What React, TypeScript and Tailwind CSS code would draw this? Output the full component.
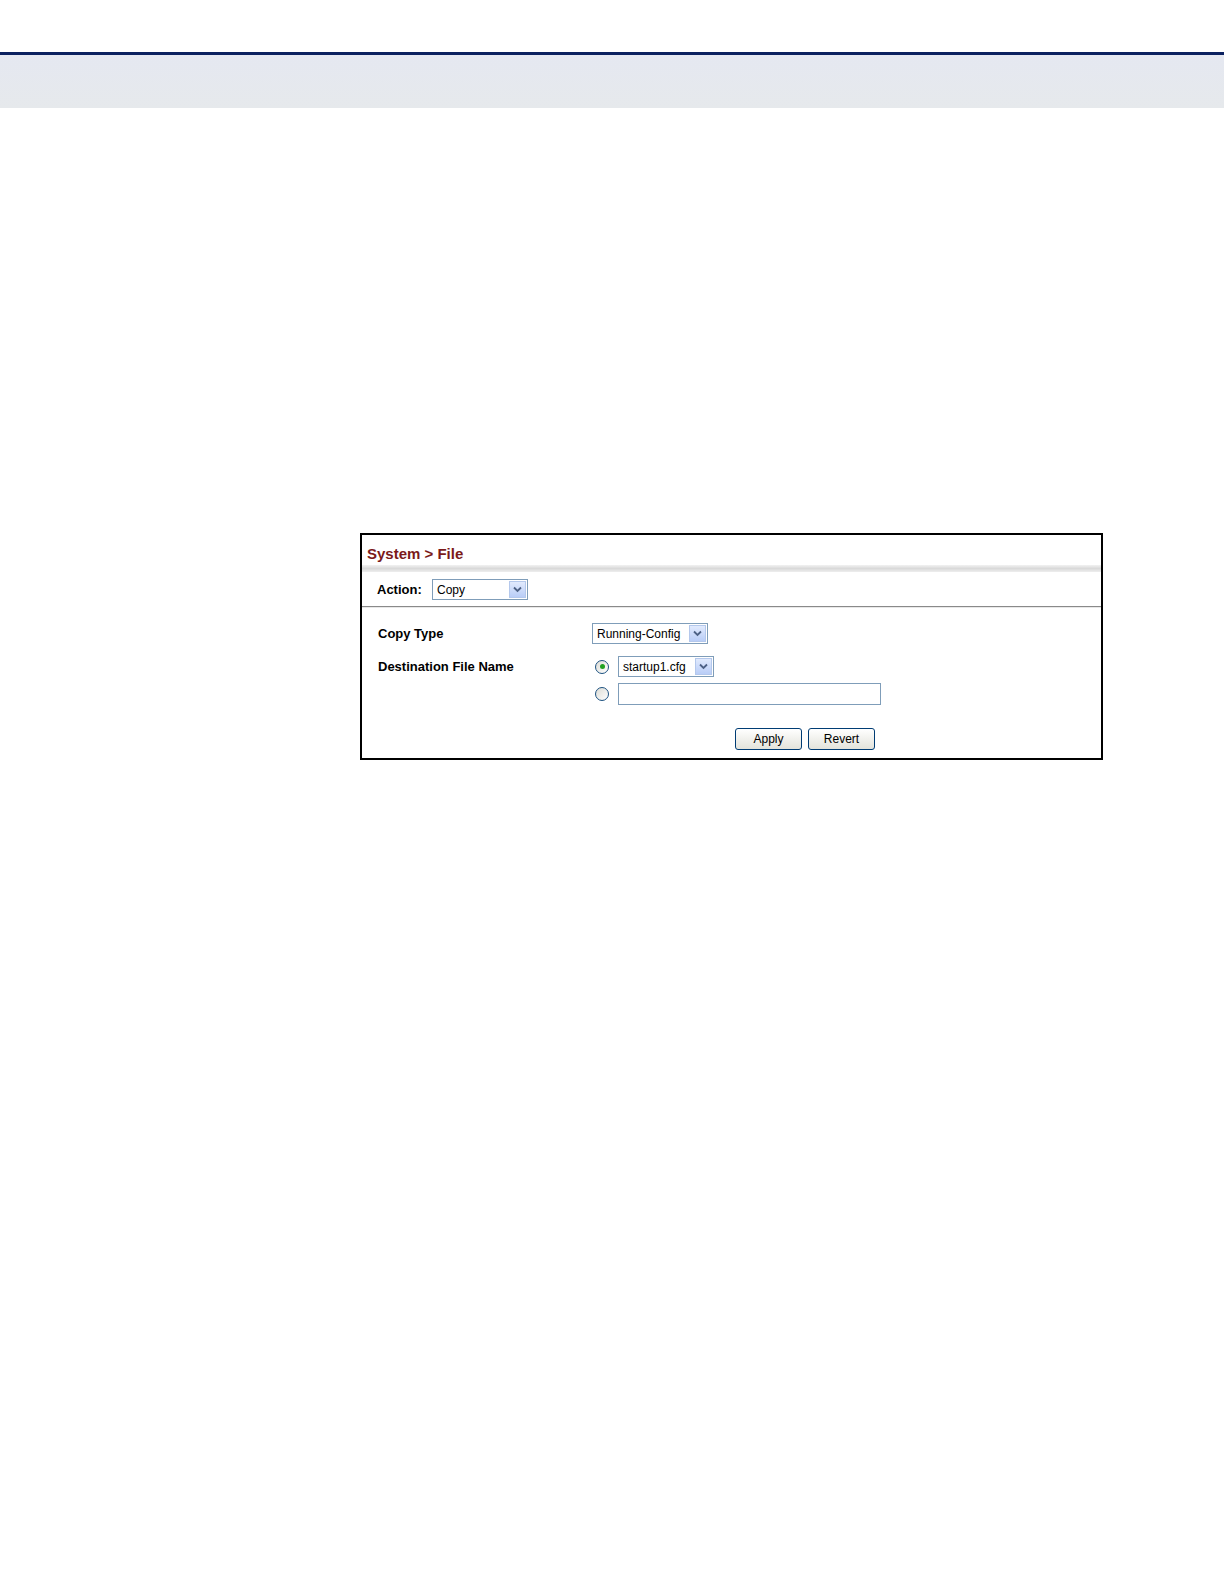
import React from "react";

const font = { fontFamily: '"Liberation Sans", Arial, sans-serif' };

function Arrow() {
  return (
    <span className="flex h-full w-[17px] items-center justify-center border border-[#b4c8ec] bg-gradient-to-b from-[#e1eafd] to-[#b9cdf7]">
      <svg width="9" height="7" viewBox="0 0 9 7">
        <path d="M1 1.5 L4.5 5 L8 1.5" fill="none" stroke="#4d6185" strokeWidth="1.8" />
      </svg>
    </span>
  );
}

function Select({ value, width }: { value: string; width: string }) {
  return (
    <div className={`flex h-[21px] items-center border border-[#7f9db9] bg-white p-[1px] ${width}`}>
      <span className="flex-1 pl-[3px] text-[12px] leading-none text-black">{value}</span>
      <Arrow />
    </div>
  );
}

function Radio({ checked }: { checked?: boolean }) {
  return (
    <span className="flex h-[14px] w-[14px] items-center justify-center rounded-full border border-[#1c5180] bg-gradient-to-br from-[#dcdcd6] to-white">
      {checked && <span className="h-[5px] w-[5px] rounded-full bg-[#21a121]" />}
    </span>
  );
}

function Button({ label }: { label: string }) {
  return (
    <button className="flex h-[22px] w-[67px] items-center justify-center rounded-[3px] border border-[#003c74] bg-gradient-to-b from-white to-[#e3e3db] text-[12px] text-black">
      {label}
    </button>
  );
}

export default function App() {
  return (
    <div className="min-h-[1584px] w-[1224px] bg-white" style={font}>
      <div className="h-[52px]" />
      <div className="h-[3px] bg-[#0b2160]" />
      <div className="h-[53px] bg-gradient-to-b from-[#e5e8f1] to-[#e6e9ec]" />
      <div className="h-[425px]" />
      <div className="ml-[360px] w-[743px] border-2 border-black bg-white">
        <div className="flex h-[30px] items-end pb-[4px] pl-[5px]">
          <span className="text-[15px] font-bold leading-none text-[#7b1a1a]">System &gt; File</span>
        </div>
        <div className="h-[7px] bg-gradient-to-b from-[#f2f2f2] via-[#d9d9d9] to-[#eeeeee]" />
        <div className="flex h-[34px] items-center pl-[15px] pt-[1px]">
          <span className="w-[55px] text-[13px] font-bold text-black">Action:</span>
          <Select value="Copy" width="w-[96px]" />
        </div>
        <div className="h-[1px] bg-[#8a8a8a]" />
        <div className="h-[1px] bg-[#e8e8e8]" />
        <div className="flex flex-col pl-[16px] pt-[15px]">
          <div className="flex h-[21px] items-center">
            <span className="w-[214px] text-[13px] font-bold text-black">Copy Type</span>
            <Select value="Running-Config" width="w-[116px]" />
          </div>
          <div className="mt-[12px] flex h-[21px] items-center">
            <span className="w-[217px] text-[13px] font-bold text-black">Destination File Name</span>
            <Radio checked />
            <span className="w-[9px]" />
            <Select value="startup1.cfg" width="w-[96px]" />
          </div>
          <div className="mt-[6px] flex h-[22px] items-center">
            <span className="w-[217px]" />
            <Radio />
            <span className="w-[9px]" />
            <div className="h-[22px] w-[263px] border border-[#7f9db9] bg-white" />
          </div>
          <div className="mt-[22px] flex h-[23px] items-center pl-[357px]">
            <Button label="Apply" />
            <span className="w-[6px]" />
            <Button label="Revert" />
          </div>
          <div className="h-[8px]" />
        </div>
      </div>
    </div>
  );
}
